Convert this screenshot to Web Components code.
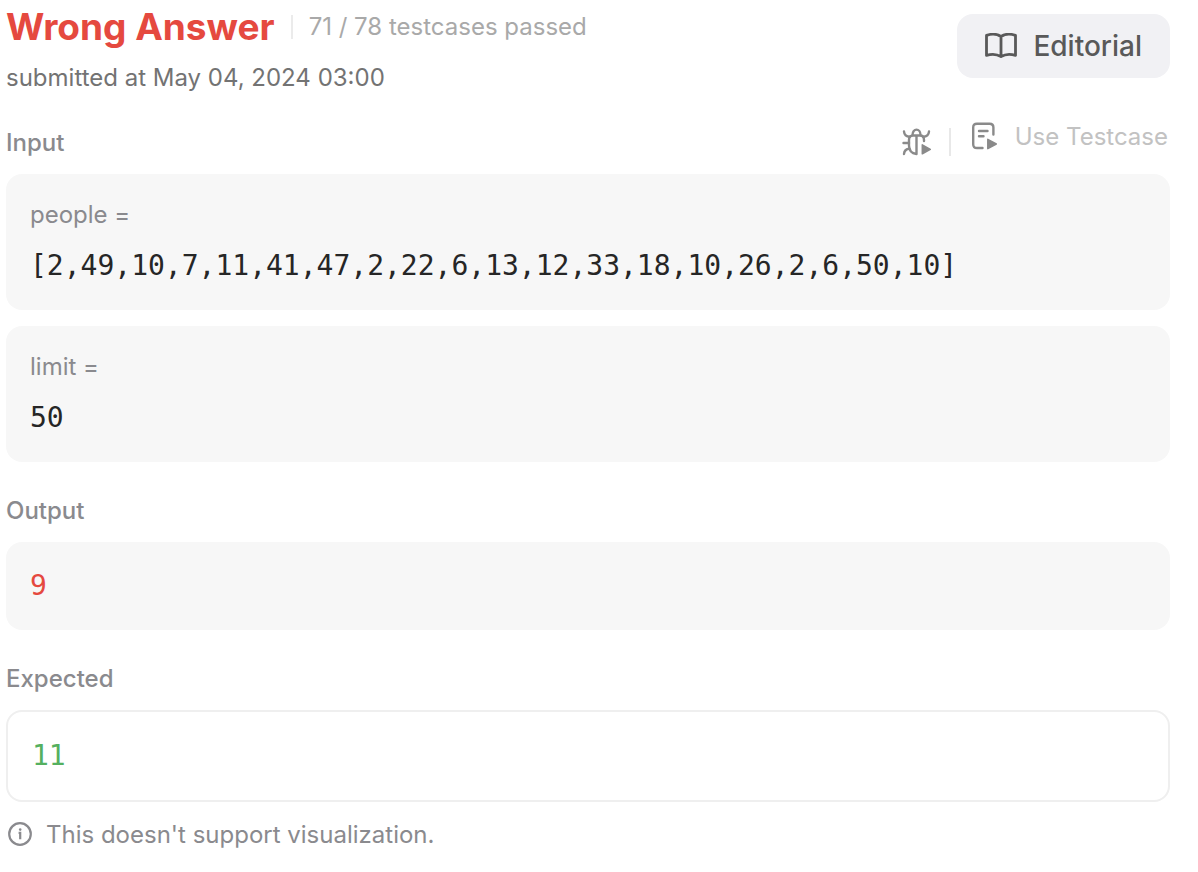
<!DOCTYPE html>
<html lang="en">
<head>
<meta charset="utf-8">
<title>Submission result</title>
<style>
  body {
    margin: 0;
    background: #fff;
    color: #8a8a8e;
    font: 400 24px/34px Inter, "Liberation Sans", sans-serif;
  }
</style>
</head>
<body>
<submission-result></submission-result>

<template id="header-template">
  <style>
    :host { display: flex; justify-content: space-between; align-items: flex-start; }
    .summary { display: flex; flex-direction: column; gap: 10px; }
    .status { display: flex; align-items: center; gap: 16px; }
    h1 { margin: 0; color: #e5493f; font-size: 37px; line-height: 50px; font-weight: 700; }
    .rule { width: 2px; height: 24px; background: #ebebeb; }
    .passed { color: #a9a9a9; }
    .date { margin: 0; color: #737373; line-height: 32px; }
    editorial-button { margin-top: 12px; }
  </style>
  <div class="summary">
    <div class="status">
      <h1><slot name="verdict"></slot></h1>
      <span class="rule"></span>
      <span class="passed"><slot name="passed"></slot></span>
    </div>
    <p class="date"><slot name="date"></slot></p>
  </div>
  <editorial-button>Editorial</editorial-button>
</template>

<template id="editorial-template">
  <style>
    :host { display: block; }
    button {
      display: flex; align-items: center; gap: 16px;
      padding: 15px 28px; border: 0; border-radius: 16px;
      background: #f1f1f4; color: #595959;
      font: inherit; font-size: 28px; font-weight: 500; cursor: pointer;
    }
    svg { display: block; }
  </style>
  <button type="button">
    <svg width="32" height="26" viewBox="0 0 32 26" fill="none" stroke="currentColor" stroke-width="2.8" stroke-linejoin="round" aria-hidden="true">
      <path d="M16 3.500C12 .9 6 .8 1.500 2.400V22.400C6.500 20.800 12 21.100 16 23.700C20 21.100 25.500 20.800 30.500 22.400V2.400C26 .8 20 .9 16 3.500ZM16 3.500V23.700"/>
    </svg>
    <slot></slot>
  </button>
</template>

<template id="tools-template">
  <style>
    :host { display: flex; align-items: center; gap: 16px; }
    button {
      display: flex; align-items: center; gap: 18px;
      padding: 0; border: 0; background: none;
      color: #c2c2c2; font: inherit; line-height: 32px; cursor: pointer;
    }
    svg { display: block; color: #8a8a8a; }
    .use { padding: 0 2px 10px 4px; gap: 16px; }
    .rule { width: 2px; height: 28px; background: #e8e8e8; }
  </style>
  <button type="button" aria-label="Debug">
    <svg width="32" height="30" viewBox="0 0 32 30" fill="none" stroke="currentColor" stroke-width="2.400" stroke-linecap="round" aria-hidden="true">
      <path d="M11.500 8C11.500 .8 19.500 .8 19.500 8"/>
      <path d="M15.500 27C10.500 26.500 8 23 8 18.500V13C8 10 9.500 8.500 12 8.500H19C21.500 8.500 23 10 23 13V14M15.500 9V27"/>
      <path d="M3 4.500C3.200 7.500 5 9.600 9 9.800M28 4.500C27.800 7.500 26 9.600 22 9.800M2.500 16H8M3 27C3.200 24 5 22 8.500 21.800"/>
      <path d="M21.300 17.800L29.300 22.300L21.300 26.800Z" fill="currentColor" stroke-width="1.500" stroke-linejoin="round"/>
    </svg>
  </button>
  <span class="rule"></span>
  <button type="button" class="use">
    <svg width="28" height="30" viewBox="0 0 28 30" fill="none" stroke="currentColor" stroke-width="2.400" stroke-linecap="round" stroke-linejoin="round" aria-hidden="true">
      <path d="M11.500 26H6Q2.200 26 2.200 22.200V5.500Q2.200 1.700 6 1.700H18.600Q22.400 1.700 22.400 5.500V12.500"/>
      <path d="M8 9H16.500M8 14.200H12.500"/>
      <path d="M16.800 17.300L25.300 22L16.800 26.700Z" fill="currentColor" stroke-width="1.500"/>
    </svg>
    <slot></slot>
  </button>
</template>

<template id="section-template">
  <style>
    :host { display: flex; flex-direction: column; gap: 16px; }
    header { display: flex; justify-content: space-between; align-items: flex-end; height: 32px; }
    h2 { margin: 0; font-size: 24px; line-height: 30px; font-weight: 500; }
    ::slotted([slot="actions"]) { align-self: center; }
  </style>
  <header><h2></h2><slot name="actions"></slot></header>
  <slot></slot>
</template>

<template id="card-template">
  <style>
    :host {
      display: flex; flex-direction: column; gap: 14px;
      padding: 24px; border-radius: 16px; background: #f7f7f7; color: #262626;
    }
    :host([tone="wrong"]) { color: #e5493f; }
    :host([tone="right"]) { color: #55b05f; background: #fff; border: 2px solid #efefef; }
    .label { color: #8a8a8e; }
    .value { font: 28px/40px "DejaVu Sans Mono", monospace; overflow-wrap: anywhere; }
  </style>
  <div class="label"></div>
  <div class="value"><slot></slot></div>
</template>

<template id="note-template">
  <style>
    :host { display: flex; align-items: flex-start; gap: 12px; }
    svg { display: block; flex: none; }
  </style>
  <svg width="28" height="32" viewBox="0 0 28 32" fill="none" stroke="currentColor" stroke-width="2.200" aria-hidden="true">
    <circle cx="14" cy="16" r="10.800"/>
    <path d="M12.600 14.800H14.200V21.300"/>
    <circle cx="14.200" cy="11.600" r="1.300" fill="currentColor" stroke="none"/>
  </svg>
  <span><slot></slot></span>
</template>

<template id="result-template">
  <style>
    :host { display: block; padding: 2px 28px 20px 6px; }
    main { display: flex; flex-direction: column; gap: 32px; }
    .end { display: flex; flex-direction: column; gap: 16px; }
  </style>
  <main>
    <result-header>
      <span slot="verdict">Wrong Answer</span>
      <span slot="passed">71 / 78 testcases passed</span>
      <span slot="date">submitted at May 04, 2024 03:00</span>
    </result-header>
    <result-section heading="Input">
      <testcase-tools slot="actions">Use Testcase</testcase-tools>
      <value-card label="people =">[2,49,10,7,11,41,47,2,22,6,13,12,33,18,10,26,2,6,50,10]</value-card>
      <value-card label="limit =">50</value-card>
    </result-section>
    <result-section heading="Output">
      <value-card tone="wrong">9</value-card>
    </result-section>
    <div class="end">
      <result-section heading="Expected">
        <value-card tone="right">11</value-card>
      </result-section>
      <info-note>This doesn't support visualization.</info-note>
    </div>
  </main>
</template>

<script>
  class TemplateElement extends HTMLElement {
    constructor() {
      super();
      const template = document.getElementById(this.constructor.template);
      this.attachShadow({ mode: "open" }).append(template.content.cloneNode(true));
    }
  }
  class EditorialButton extends TemplateElement { static template = "editorial-template"; }
  class ResultHeader extends TemplateElement { static template = "header-template"; }
  class TestcaseTools extends TemplateElement { static template = "tools-template"; }
  class InfoNote extends TemplateElement { static template = "note-template"; }
  class SubmissionResult extends TemplateElement { static template = "result-template"; }
  class ResultSection extends TemplateElement {
    static template = "section-template";
    connectedCallback() {
      this.shadowRoot.querySelector("h2").textContent = this.getAttribute("heading");
    }
  }
  class ValueCard extends TemplateElement {
    static template = "card-template";
    connectedCallback() {
      const label = this.shadowRoot.querySelector(".label");
      label.textContent = this.getAttribute("label") || "";
      label.hidden = !this.hasAttribute("label");
    }
  }
  customElements.define("editorial-button", EditorialButton);
  customElements.define("result-header", ResultHeader);
  customElements.define("testcase-tools", TestcaseTools);
  customElements.define("info-note", InfoNote);
  customElements.define("result-section", ResultSection);
  customElements.define("value-card", ValueCard);
  customElements.define("submission-result", SubmissionResult);
</script>
</body>
</html>
